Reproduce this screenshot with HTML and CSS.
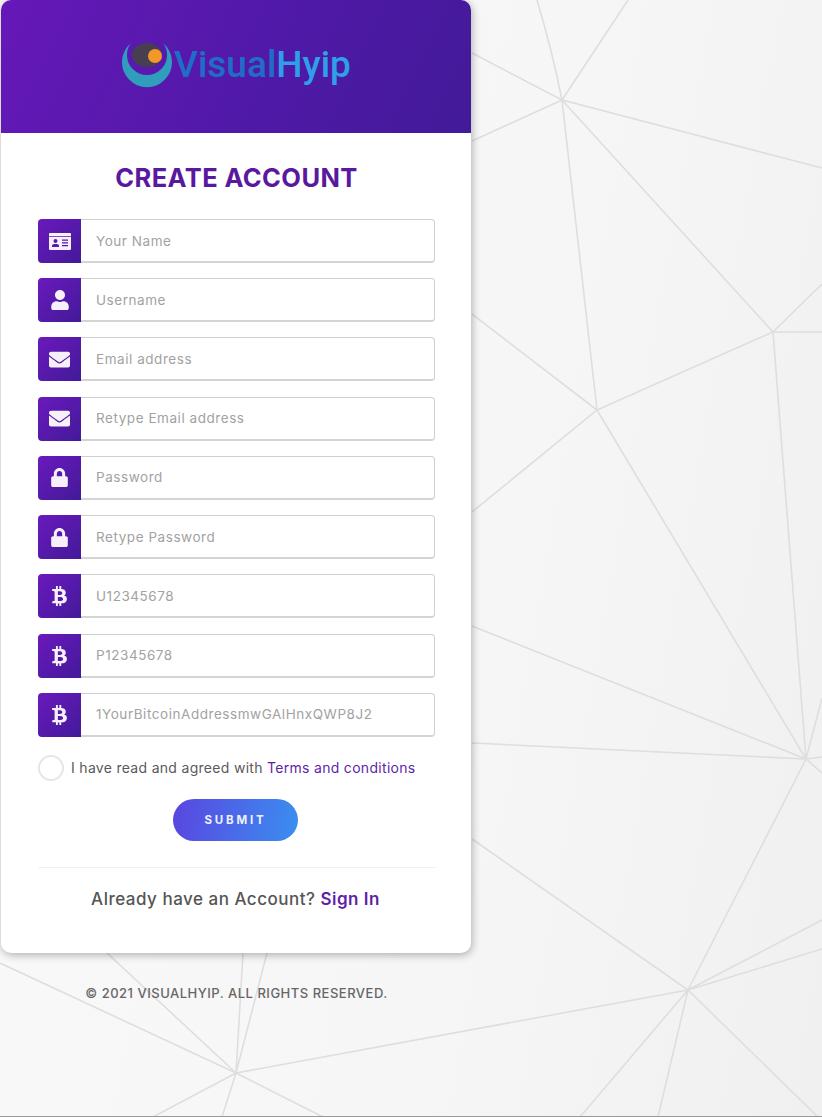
FILE: index.html
```html
<!DOCTYPE html>
<html lang="en">
<head>
    <meta charset="UTF-8">
    <meta name="viewport" content="width=device-width, initial-scale=1.0">
    <title>Create Account</title>
    <link rel="stylesheet" href="styles.css">
</head>
<body>

<!-- Icon definitions -->
<svg class="icon-defs" aria-hidden="true">
    <symbol id="i-card" viewBox="0 0 22 17">
        <path fill-rule="evenodd" d="M1 0h20a1 1 0 0 1 1 1v15a1 1 0 0 1-1 1H1a1 1 0 0 1-1-1V1a1 1 0 0 1 1-1zM0 3.200v.8h22v-.8zM6.500 6a2 2 0 1 1 0 4 2 2 0 0 1 0-4zM3 14v-1c0-1.200 1-2 2-2h3c1 0 2 .8 2 2v1zM13 6.500h6v1.200h-6zM13 9.300h6v1.200h-6zM13 12.100h6v1.200h-6z"/>
    </symbol>
    <symbol id="i-user" viewBox="0 0 448 512">
        <path d="M224 256c70.700 0 128-57.300 128-128S294.700 0 224 0 96 57.300 96 128s57.300 128 128 128zm89.600 32h-16.700c-22.200 10.200-46.900 16-72.900 16s-50.600-5.800-72.900-16h-16.700C60.200 288 0 348.200 0 422.400V464c0 26.500 21.500 48 48 48h352c26.500 0 48-21.500 48-48v-41.600c0-74.200-60.200-134.400-134.400-134.400z"/>
    </symbol>
    <symbol id="i-mail" viewBox="0 0 512 512">
        <path d="M502.300 190.800c3.900-3.100 9.700-.2 9.700 4.700V400c0 26.500-21.500 48-48 48H48c-26.500 0-48-21.500-48-48V195.600c0-5 5.700-7.800 9.700-4.700 22.400 17.400 52.100 39.500 154.100 113.600 21.100 15.400 56.700 47.800 92.200 47.600 35.700.3 72-32.800 92.300-47.600 102-74.100 131.600-96.300 154-113.700zM256 320c23.200.4 56.600-29.200 73.400-41.400 132.700-96.300 142.800-104.700 173.400-128.700 5.800-4.500 9.200-11.500 9.200-18.900v-19c0-26.500-21.500-48-48-48H48C21.500 64 0 85.500 0 112v19c0 7.400 3.400 14.300 9.200 18.900 30.600 23.900 40.700 32.400 173.400 128.700 16.800 12.200 50.200 41.800 73.400 41.400z"/>
    </symbol>
    <symbol id="i-lock" viewBox="0 0 448 512">
        <path d="M400 224h-24v-72C376 68.200 307.800 0 224 0S72 68.200 72 152v72H48c-26.500 0-48 21.500-48 48v192c0 26.500 21.500 48 48 48h352c26.500 0 48-21.500 48-48V272c0-26.500-21.500-48-48-48zm-104 0H152v-72c0-39.700 32.300-72 72-72s72 32.300 72 72v72z"/>
    </symbol>
    <symbol id="i-btc" viewBox="0 0 384 512">
        <path d="M310.204 242.638c27.730-14.180 45.377-39.390 41.280-81.300-5.358-57.351-52.458-76.573-114.850-81.929V0h-48.528v77.203c-12.605 0-25.525.315-38.444.63V0h-48.528v79.409c-17.842.539-38.622.276-97.370 0v51.678c38.314-.678 58.417-3.140 63.023 21.427v217.429c-2.925 19.492-18.524 16.685-53.255 16.071L3.765 443.680c88.481 0 97.370.315 97.370.315V512h48.528v-67.060c13.234.315 26.154.315 38.444.315V512h48.528v-68.005c81.299-4.412 135.647-24.894 142.895-101.467 5.671-61.446-23.320-88.862-69.326-99.890zM150.608 134.553c27.415 0 113.126-8.507 113.126 48.528 0 54.515-85.710 48.212-113.126 48.212v-96.740zm0 251.776V279.821c32.772 0 133.127-9.138 133.127 53.255-.001 60.186-100.355 53.253-133.127 53.253z"/>
    </symbol>
</svg>

<!-- Background line pattern -->
<svg class="backdrop" viewBox="0 0 822 1117" aria-hidden="true">
    <path d="M537 0Q552 50 562 100M628 0L562 100M472 53L562 100M472 141L562 100M822 168L562 100L773 332M562 100L597 410M822 284L773 332H822M773 332L597 410M773 332L806 759M472 314L597 410M472 512L597 410L806 759M472 626L806 759M472 743L806 759M822 698L806 759M822 757L806 759M822 773L806 759M806 759L688 990M472 839L688 990M822 920L688 990M822 949L688 990M236 1073L688 990M580 1117L688 990M658 1117L688 990M818 1117L688 990M0 963L236 1073M107 953L236 1073M243 953L236 1073M267 953L236 1073M153 1117L236 1073M222 1117L236 1073M323 1117L236 1073"/>
</svg>

<main class="page">
    <div class="card">
        <div class="card-head">
            <div class="logo">
                <svg class="logo-mark" viewBox="0 0 52 46" aria-hidden="true">
                    <path class="logo-moon" d="M10 1A25 25 0 1 0 42 1A20 20 0 1 1 10 1Z"/>
                    <ellipse class="logo-dark" cx="26" cy="13" rx="15" ry="12"/>
                    <circle class="logo-dot" cx="34" cy="14" r="7"/>
                </svg>
                <span class="logo-text">Visual<span class="logo-accent">Hyip</span></span>
            </div>
        </div>

        <div class="card-body">
            <h1 class="title">CREATE ACCOUNT</h1>

            <form class="signup-form">
                <div class="field">
                    <span class="field-icon"><svg class="icon-card"><use href="#i-card"/></svg></span>
                    <input type="text" placeholder="Your Name">
                </div>
                <div class="field">
                    <span class="field-icon"><svg class="icon-user"><use href="#i-user"/></svg></span>
                    <input type="text" placeholder="Username">
                </div>
                <div class="field">
                    <span class="field-icon"><svg class="icon-mail"><use href="#i-mail"/></svg></span>
                    <input type="email" placeholder="Email address">
                </div>
                <div class="field">
                    <span class="field-icon"><svg class="icon-mail"><use href="#i-mail"/></svg></span>
                    <input type="email" placeholder="Retype Email address">
                </div>
                <div class="field">
                    <span class="field-icon"><svg class="icon-lock"><use href="#i-lock"/></svg></span>
                    <input type="password" placeholder="Password">
                </div>
                <div class="field">
                    <span class="field-icon"><svg class="icon-lock"><use href="#i-lock"/></svg></span>
                    <input type="password" placeholder="Retype Password">
                </div>
                <div class="field">
                    <span class="field-icon"><svg class="icon-btc"><use href="#i-btc"/></svg></span>
                    <input type="text" placeholder="U12345678">
                </div>
                <div class="field">
                    <span class="field-icon"><svg class="icon-btc"><use href="#i-btc"/></svg></span>
                    <input type="text" placeholder="P12345678">
                </div>
                <div class="field">
                    <span class="field-icon"><svg class="icon-btc"><use href="#i-btc"/></svg></span>
                    <input type="text" placeholder="1YourBitcoinAddressmwGAlHnxQWP8J2">
                </div>

                <label class="agree">
                    <span class="agree-box"></span>
                    <span>I have read and agreed with <a href="#">Terms and conditions</a></span>
                </label>

                <button class="submit-btn" type="submit">SUBMIT</button>
            </form>

            <p class="signin">Already have an Account? <a href="#">Sign In</a></p>
        </div>
    </div>

    <p class="copyright">© 2021 VISUALHYIP. ALL RIGHTS RESERVED.</p>
</main>

</body>
</html>
```

FILE: styles.css
```css
* {
    box-sizing: border-box;
}
body {
    margin: 0;
    height: 1117px;
    overflow: hidden;
    position: relative;
    font-family: Inter, "Open Sans", sans-serif;
    background: linear-gradient(100deg, #f9f9f9 0%, #f6f6f6 60%, #f0f0f0 100%);
    border-bottom: 1px solid #9a9a9a;
}
a {
    color: #5f1fa8;
    text-decoration: none;
}
.icon-defs {
    display: none;
}
.backdrop {
    position: absolute;
    left: 0;
    top: 0;
    width: 822px;
    height: 1117px;
}
.backdrop path {
    fill: none;
    stroke: #dedede;
    stroke-width: 1.600;
}
.page {
    position: relative;
    width: 472px;
    padding-left: 1px;
}
.card {
    width: 470px;
    height: 953px;
    background-color: white;
    border-radius: 10px;
    box-shadow: 1px 2px 8px rgba(0, 0, 0, 0.3);
    overflow: hidden;
}
.card-head {
    height: 133px;
    padding: 42px 0 0 120px;
    background: linear-gradient(115deg, #6618b8 0%, #5019a8 55%, #421a98 100%);
}
.logo {
    display: flex;
    align-items: flex-start;
}
.logo-mark {
    width: 52px;
    height: 46px;
    flex: none;
}
.logo-moon {
    fill: #2f9dbb;
}
.logo-dark {
    fill: #473f4f;
}
.logo-dot {
    fill: #f4972b;
}
.logo-text {
    margin-left: 1px;
    font-family: Roboto, sans-serif;
    font-weight: 500;
    font-size: 37px;
    line-height: 46px;
    color: #1f6ec6;
}
.logo-accent {
    color: #2f9fe8;
}
.card-body {
    padding: 0 36px 0 37px;
}
.title {
    margin: 27px 0 23px;
    font-size: 25.500px;
    line-height: 36px;
    font-weight: 700;
    letter-spacing: 0.4px;
    text-align: center;
    color: #5a189f;
}
.signup-form {
    display: flex;
    flex-direction: column;
    gap: 15.240px;
}
.field {
    display: flex;
    height: 44px;
}
.field-icon {
    width: 43px;
    flex: none;
    display: flex;
    align-items: center;
    justify-content: center;
    border-radius: 4px 0 0 4px;
    background: linear-gradient(135deg, #6a19bd 0%, #421a98 100%);
}
.field-icon svg {
    fill: #f6f0fb;
}
.icon-card {
    width: 22px;
    height: 17px;
}
.icon-user {
    width: 18px;
    height: 20px;
}
.icon-mail {
    width: 21px;
    height: 21px;
}
.icon-lock {
    width: 17px;
    height: 19px;
}
.icon-btc {
    width: 15px;
    height: 20px;
}
.field input {
    flex: 1;
    min-width: 0;
    padding: 0 15px;
    border: 1px solid #d0d0d0;
    border-left: none;
    border-bottom: 2px solid #d4d4d4;
    border-radius: 0 4px 4px 0;
    background-color: white;
    font-family: Inter, "Open Sans", sans-serif;
    font-size: 13.500px;
    letter-spacing: 0.55px;
}
.field input::placeholder {
    color: #a2a2a2;
}
.agree {
    display: flex;
    align-items: center;
    gap: 7px;
    height: 27px;
    margin-top: 2px;
    font-size: 14px;
    letter-spacing: 0.3px;
    color: #5a5a5a;
}
.agree-box {
    width: 26px;
    height: 26px;
    flex: none;
    border: 2px solid #e6e6e6;
    border-radius: 50%;
}
.submit-btn {
    align-self: center;
    width: 125px;
    height: 42px;
    margin: 2.600px 2px 0 0;
    border: none;
    border-radius: 21px;
    background: linear-gradient(100deg, #5a45e0 0%, #3a8ff0 100%);
    color: #eef0ff;
    font-family: Inter, "Open Sans", sans-serif;
    font-size: 11.500px;
    font-weight: 700;
    letter-spacing: 2.800px;
}
.signin {
    margin: 26px 0 0;
    padding: 19px 2px 0 0;
    border-top: 1px solid #f0f0f0;
    font-size: 17px;
    line-height: 24px;
    font-weight: 500;
    letter-spacing: 0.5px;
    text-align: center;
    color: #555;
}
.signin a {
    font-weight: 600;
}
.copyright {
    margin: 32px 0 0;
    font-size: 13px;
    line-height: 16px;
    font-weight: 500;
    letter-spacing: 0.5px;
    text-align: center;
    color: #666;
}
```
